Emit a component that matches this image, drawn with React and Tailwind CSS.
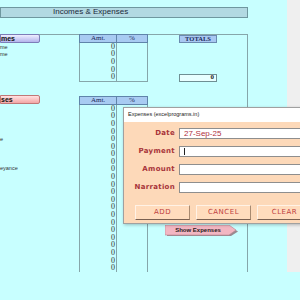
export default function App() {
  const incomeRows = Array.from({ length: 5 });
  const expRows = Array.from({ length: 22 });
  const line = "border-[#86a6aa]";
  return (
    <div className="relative w-[300px] h-[300px] overflow-hidden bg-[#c8ffff] font-['Liberation_Sans',sans-serif]">
      <div className="flex h-[272px]">
        <div className="w-[287px] flex flex-col">
          <div className="mt-[7px] w-[248px] h-[11px] bg-[#b2d9e2] border border-[#6f979f] flex items-center pl-[52px] text-[8px] leading-none text-[#1a2a3a]">
            Incomes &amp; Expenses
          </div>
          <div className={`mt-[16px] w-[248px] flex-1 border-t border-r ${line} flex flex-col`}>
            {/* Income section */}
            <div className="flex h-[61px] -mt-px">
              <div className="w-[40px] flex flex-col">
                <div className="h-[9px] rounded-r-[2px] border border-[#7d7db8] bg-gradient-to-b from-[#eeeeff] to-[#b4b4ec] flex items-center text-[7px] font-bold leading-none text-[#111]">
                  <span className="whitespace-nowrap">mes</span>
                </div>
                <div className="mt-[1px] flex flex-col text-[5.5px] leading-[7.5px] text-[#333]">
                  <span className="whitespace-nowrap">me</span>
                  <span className="whitespace-nowrap">me</span>
                </div>
              </div>
              <div className="w-[39px]" />
              <div className="w-[69px] flex flex-col font-['Liberation_Serif',serif]">
                <div className="h-[9px] flex bg-[#a8cbf2] border border-[#5f84aa] text-[7px] leading-none text-[#1b2a5a]">
                  <div className="w-[37px] border-r border-[#5f84aa] flex items-center justify-center">Amt.</div>
                  <div className="flex-1 flex items-center justify-center">%</div>
                </div>
                <div className={`flex border-l border-r border-b ${line}`}>
                  <div className={`w-[37px] border-r ${line} flex flex-col`}>
                    {incomeRows.map((_, i) => (
                      <div key={i} className="h-[7.6px] flex items-center justify-end pr-[1px] text-[8px] leading-none text-[#333]">0</div>
                    ))}
                  </div>
                  <div className="flex-1" />
                </div>
              </div>
              <div className="w-[31px]" />
              <div className="w-[38px] flex flex-col font-['Liberation_Serif',serif]">
                <div className="mt-[1px] h-[8px] bg-[#a8c8f2] border border-[#6a8ab0] flex items-center justify-center text-[6.5px] font-bold leading-none text-[#1b2a5a]">TOTALS</div>
                <div className="mt-[31px] h-[8px] bg-[#e8ffff] border border-[#6f8f93] flex items-center justify-end pr-[2px] text-[7px] font-bold leading-none text-[#222]">0</div>
              </div>
            </div>
            {/* Expense section */}
            <div className="flex flex-1">
              <div className="w-[40px] flex flex-col">
                <div className="h-[9px] rounded-r-[2px] border border-[#c07878] bg-gradient-to-b from-[#ffe2e2] to-[#f2a6a6] flex items-center text-[7px] font-bold leading-none text-[#111]">
                  <span className="whitespace-nowrap">ses</span>
                </div>
                <div className="mt-[32px] flex flex-col text-[5.5px] leading-[7.5px] text-[#333]">
                  <span className="whitespace-nowrap">e</span>
                </div>
                <div className="mt-[22px] flex flex-col text-[5.5px] leading-[7.5px] text-[#333]">
                  <span className="whitespace-nowrap">eyance</span>
                </div>
              </div>
              <div className="w-[39px]" />
              <div className="w-[69px] flex flex-col font-['Liberation_Serif',serif]">
                <div className="mt-[1px] h-[9px] flex bg-[#a8cbf2] border border-[#5f84aa] text-[7px] leading-none text-[#1b2a5a]">
                  <div className="w-[37px] border-r border-[#5f84aa] flex items-center justify-center">Amt.</div>
                  <div className="flex-1 flex items-center justify-center">%</div>
                </div>
                <div className={`flex flex-1 border-l border-r ${line}`}>
                  <div className={`w-[37px] border-r ${line} flex flex-col`}>
                    {expRows.map((_, i) => (
                      <div key={i} className="h-[7.6px] flex items-center justify-end pr-[1px] text-[8px] leading-none text-[#333]">0</div>
                    ))}
                  </div>
                  <div className="flex-1" />
                </div>
              </div>
              <div className="flex-1 pl-[17px] pt-[130px]">
                <div className="relative w-[74px] h-[12px]">
                  <svg className="absolute left-0 top-0" width="74" height="12" viewBox="0 0 74 12">
                    <polygon points="2,2 66,2 73,6.5 66,11 2,11" fill="#9a8a90" />
                    <polygon points="0,0 64,0 71,5 64,10 0,10" fill="#f2b6c2" stroke="#b88892" strokeWidth="0.6" />
                  </svg>
                  <div className="relative h-[10px] w-[66px] flex items-center justify-center text-[6px] font-bold leading-none text-[#2a1a20]">
                    Show Expenses
                  </div>
                </div>
              </div>
            </div>
          </div>
        </div>
        <div className="flex-1 bg-[#efefef]" />
      </div>

      {/* Dialog */}
      <div className="absolute left-[123px] top-[107px] w-[190px] h-[117px] border border-[#a0a0a0] shadow-[1px_1px_3px_rgba(0,0,0,0.25)] flex flex-col">
        <div className="h-[14px] bg-white flex items-center pl-[4px] text-[5.5px] leading-none text-[#222]">
          Expenses (excelprograms.in)
        </div>
        <div className="flex-1 bg-[#fdd9b9] flex flex-col pt-[6px]">
          {[
            ["Date", "27-Sep-25"],
            ["Payment", ""],
            ["Amount", ""],
            ["Narration", ""],
          ].map(([label, val], i) => (
            <div key={label} className={`flex items-center h-[11px] ${i > 0 ? "mt-[7px]" : ""}`}>
              <div className="w-[51px] text-right text-[7px] font-bold leading-none tracking-[0.3px] text-[#a8343a] font-['DejaVu_Sans',sans-serif]">
                {label}
              </div>
              <div className="ml-[4px] flex-1 h-[11px] bg-white border border-[#8e8e8e] border-r-0 flex items-center pl-[4px] text-[8px] leading-none text-[#b03040]">
                {val}
                {i === 1 && <span className="w-px h-[7px] bg-[#222]" />}
              </div>
            </div>
          ))}
          <div className="mt-[12px] flex pl-[11px] gap-[6px]">
            {["ADD", "CANCEL", "CLEAR"].map((b) => (
              <div key={b} className="w-[55px] h-[15px] bg-[#ffdcbd] border border-t-[#fff2e6] border-l-[#fff2e6] border-r-[#a88a70] border-b-[#7a6050] flex items-center justify-center text-[7px] leading-none tracking-[0.5px] text-[#c0403e] font-['DejaVu_Sans',sans-serif]">
                {b}
              </div>
            ))}
          </div>
        </div>
      </div>
    </div>
  );
}
